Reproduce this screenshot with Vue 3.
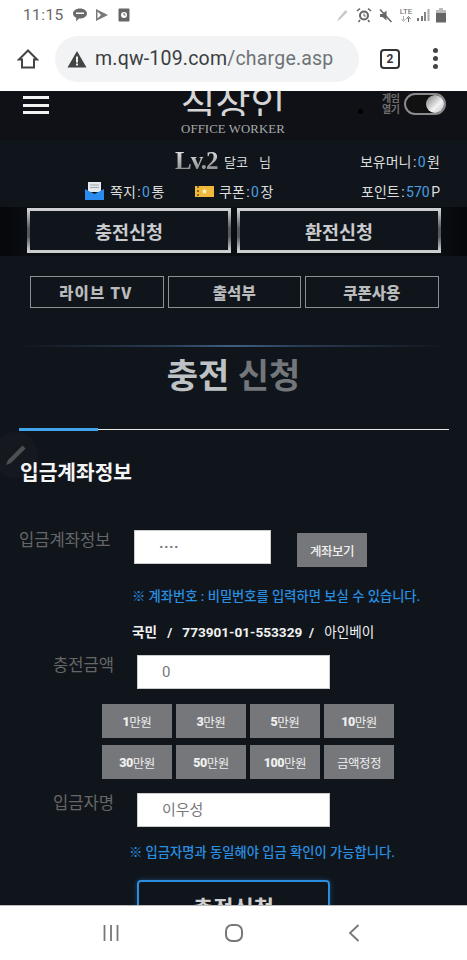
<script setup>
const rows = [
  [['1', '만원'], ['3', '만원'], ['5', '만원'], ['10', '만원']],
  [['30', '만원'], ['50', '만원'], ['100', '만원'], ['', '금액정정']],
]
</script>

<template>
  <div class="phone">
    <div class="status">
      <span class="time">11:15</span>
      <svg class="si" width="16" height="16" viewBox="0 0 16 16"><path d="M8 1.500c4 0 7 2.200 7 5s-3 5-7 5l-1 0-3 3 .3-3.800C2 9.800 1 8.300 1 6.500c0-2.800 3-5 7-5z" fill="#6a6a6a"/><rect x="4" y="5.500" width="8" height="1.500" fill="#fff"/></svg>
      <svg class="si play" width="14" height="14" viewBox="0 0 14 14"><path d="M1 1l12 6-12 6z" fill="#7a7a7a"/><path d="M2.500 3.500v7l3.500-3.500z" fill="#fff"/></svg>
      <svg class="si clockapp" width="12" height="14" viewBox="0 0 12 14"><rect width="11" height="13" x=".5" y=".5" rx="1" fill="#666"/><circle cx="6" cy="7" r="3" fill="#fff"/><path d="M6 5v2h1.500" stroke="#666" fill="none"/></svg>
      <span class="spacer"></span>
      <svg width="14" height="14" viewBox="0 0 14 14"><path d="M1 13.500l2-4 6.500-7.500 2 2-7 7z" fill="#c9c9c9"/></svg>
      <svg class="ml" width="16" height="16" viewBox="0 0 16 16"><circle cx="8" cy="8.500" r="5" fill="#666"/><circle cx="8" cy="8.500" r="3" fill="#fff"/><path d="M8 6.500v2.500h2" stroke="#666" fill="none"/><path d="M1 4l3-2.500M15 4l-3-2.500M4 13l-1.500 2M12 13l1.500 2" stroke="#666" stroke-width="1.600"/></svg>
      <svg class="ml" width="15" height="15" viewBox="0 0 15 15"><path d="M2 6h2.500l4-3.500v10l-4-3.500H2z" fill="#666"/><path d="M2 1.500l11.500 12.500" stroke="#666" stroke-width="1.500"/></svg>
      <span class="lte">LTE<svg width="12" height="6" viewBox="0 0 12 6"><path d="M3.500 0v4M1.500 3l2 2.500 2-2.500" stroke="#aaa" fill="none"/><path d="M8.500 6V2M6.500 3l2-2.500 2 2.500" stroke="#666" fill="none"/></svg></span>
      <svg class="ml2" width="13" height="14" viewBox="0 0 13 14"><rect x="0" y="10" width="2" height="3" fill="#777"/><rect x="4" y="8" width="2" height="5" fill="#777"/><rect x="7" y="4" width="2" height="9" fill="#888"/><rect x="10.500" y="1" width="2" height="12" fill="#aaa"/></svg>
      <svg class="ml" width="10" height="15" viewBox="0 0 10 15"><rect x="3" y="0" width="4" height="2" fill="#bbb"/><rect x="0" y="2" width="10" height="3" fill="#bbb"/><rect x="0" y="5" width="10" height="9.500" fill="#666"/></svg>
    </div>

    <div class="toolbar">
      <svg class="home" width="22" height="22" viewBox="0 0 22 22"><path d="M11 2.500L2 11.500h3v8h12v-8h3z" fill="none" stroke="#444" stroke-width="2"/></svg>
      <div class="omni">
        <svg width="20" height="18" viewBox="0 0 20 18"><path d="M10 1l9.500 16.500H.5z" fill="#444"/><rect x="9" y="6.500" width="2" height="6" fill="#f1f3f4"/><rect x="9" y="13.500" width="2" height="2" fill="#f1f3f4"/></svg>
        <span class="url">m.qw-109.com<span class="path">/charge.asp</span></span>
      </div>
      <span class="tabs">2</span>
      <span class="dots"><i></i><i></i><i></i></span>
    </div>

    <main class="content">
      <header class="top">
        <div class="burger"><i></i><i></i><i></i></div>
        <div class="logo">
          <div class="logo-clip"><span>직장인</span></div>
          <div class="logo-en">OFFICE WORKER</div>
        </div>
        <span class="bullet"></span>
        <div class="game"><span>게임<br>열기</span><div class="toggle"><i></i></div></div>
      </header>

      <section class="info">
        <div class="info-row first">
          <span class="lv">Lv.2</span>
          <span class="nick">달코</span><span class="nim">님</span>
          <span class="right money">보유머니 : <b>0</b> 원</span>
        </div>
        <div class="info-row second">
          <svg class="mail" width="19" height="18" viewBox="0 0 19 18"><rect x="3" y="0" width="13" height="10" fill="#e6e9ee"/><rect x="5" y="2.500" width="9" height="1" fill="#9aa"/><rect x="5" y="5" width="9" height="1" fill="#9aa"/><path d="M0 7l9.500 5L19 7v11H0z" fill="#2a8cf0"/></svg>
          <span class="msg">쪽지 : <b>0</b> 통</span>
          <svg class="coupon" width="19" height="11" viewBox="0 0 19 11"><rect width="19" height="11" fill="#f0b93c"/><path d="M9.500 2.500l.9 2h2l-1.600 1.400.6 2.100-1.900-1.200-1.900 1.200.6-2.100L6.600 4.500h2z" fill="#fff6c8"/><path d="M3 0v11" stroke="#0f141b" stroke-dasharray="2 2"/></svg>
          <span class="msg">쿠폰 : <b>0</b> 장</span>
          <span class="right money">포인트 : <b>570</b> P</span>
        </div>
      </section>

      <div class="band">
        <a class="big">충전신청</a>
        <a class="big">환전신청</a>
      </div>

      <nav class="subs">
        <a class="sub tv">라이브 TV</a>
        <a class="sub">출석부</a>
        <a class="sub">쿠폰사용</a>
      </nav>

      <div class="glow"></div>
      <h1 class="title"><span>충전</span> <em>신청</em></h1>

      <div class="rule"><i></i></div>

      <div class="fab">
        <svg width="24" height="24" viewBox="0 0 24 24"><path d="M2 22l2-5L18.500 2.500l3 3L7 20z" fill="#4d4f52"/></svg>
      </div>

      <h2 class="sect">입금계좌정보</h2>

      <div class="acct">
        <label class="lab wide">입금계좌정보</label>
        <div class="inp short">····</div>
        <a class="view">계좌보기</a>
      </div>
      <p class="note n1">※ 계좌번호 : 비밀번호를 입력하면 보실 수 있습니다.</p>
      <p class="bank">국민 &nbsp; / &nbsp; 773901-01-553329 &nbsp;/ &nbsp; <span>아인베이</span></p>

      <div class="fld f1">
        <label class="lab">충전금액</label>
        <div class="inp">0</div>
      </div>

      <div class="amounts">
        <template v-for="(r, ri) in rows" :key="ri">
          <a v-for="c in r" :key="c.join()" class="amt"><b>{{ c[0] }}</b>{{ c[1] }}</a>
        </template>
      </div>

      <div class="fld f2">
        <label class="lab">입금자명</label>
        <div class="inp">이우성</div>
      </div>

      <p class="note n2">※ 입금자명과 동일해야 입금 확인이 가능합니다.</p>

      <a class="submit">충전신청</a>
    </main>

    <div class="nav">
      <svg width="18" height="18" viewBox="0 0 18 18"><path d="M2.500 1v16M9 1v16M15.500 1v16" stroke="#777" stroke-width="1.800"/></svg>
      <svg width="20" height="20" viewBox="0 0 20 20"><rect x="2" y="2" width="16" height="16" rx="6" fill="none" stroke="#777" stroke-width="2"/></svg>
      <svg width="12" height="18" viewBox="0 0 12 18"><path d="M10.500 1L2 9l8.500 8" fill="none" stroke="#777" stroke-width="1.800"/></svg>
    </div>
  </div>
</template>

<style>
html, body { margin: 0; background: #fff; }
</style>

<style scoped>
* { box-sizing: border-box; }
.phone {
  width: 467px; height: 960px; display: flex; flex-direction: column; overflow: hidden;
  font-family: Roboto, "Noto Sans CJK KR", sans-serif; background: #fff;
}
.status { height: 30px; flex: none; display: flex; align-items: center; padding: 0 21px 0 23px; color: #666; }
.time { font-size: 15.500px; letter-spacing: .4px; margin-right: 8px; }
.si { margin-right: 5px; }
.si.play { margin-left: 2px; margin-right: 9px; }
.spacer { flex: 1; }
.ml { margin-left: 6px; }
.ml2 { margin-left: 4px; }
.lte { font-size: 8px; line-height: 8px; width: 14px; margin-left: 6px; color: #666; display: flex; flex-direction: column; align-items: center; }

.toolbar { height: 61px; flex: none; display: flex; align-items: center; padding: 0 0 4px 17px; }
.home { flex: none; }
.omni { width: 304px; height: 46px; margin-left: 16px; border-radius: 23px; background: #f1f3f4; display: flex; align-items: center; padding-left: 12px; }
.url { font-size: 19.500px; color: #3a3d40; margin-left: 8px; letter-spacing: .2px; white-space: nowrap; }
.path { color: #6f7377; }
.tabs { width: 20px; height: 20px; margin-left: 21px; border: 2px solid #333; border-radius: 4px; font-size: 12px; font-weight: 700; color: #333; display: flex; align-items: center; justify-content: center; }
.dots { margin-left: 33px; display: flex; flex-direction: column; gap: 3px; }
.dots i { width: 5px; height: 5px; border-radius: 50%; background: #444; }

.content { flex: 1; min-height: 0; overflow: hidden; background: #10151c; position: relative; color: #fff; }
.top { height: 49px; background: #0f1116; display: flex; position: relative; }
.burger { display: flex; flex-direction: column; gap: 4.500px; padding: 5px 0 0 23px; width: 178px; }
.burger i { display: block; width: 26px; height: 3px; background: #f2f2f2; }
.logo { width: 110px; display: flex; flex-direction: column; align-items: center; }
.logo-clip { height: 25px; overflow: hidden; position: relative; width: 110px; }
.logo-clip span {
  position: absolute; left: 0; right: 0; bottom: -4px; text-align: center; font-size: 38px; line-height: 38px; font-weight: 400;
  font-family: "Noto Sans CJK KR", sans-serif; color: #d6d6d6;
}
.logo-en { font-family: "Liberation Serif", serif; font-size: 12.800px; line-height: 14px; letter-spacing: .1px; color: #a8a8a8; margin-top: 6px; white-space: nowrap; }
.bullet { width: 5px; height: 5px; border-radius: 50%; background: #000; margin: 18px 0 0 70px; }
.game { display: flex; align-items: flex-start; margin-left: 19px; padding-top: 2px; }
.game span { font-size: 10px; line-height: 11px; font-weight: 700; color: #6f6f6f; width: 22px; text-align: left; letter-spacing: -.5px; white-space: nowrap; }
.toggle { width: 42px; height: 22px; border: 2px solid #8a8a8a; border-radius: 11px; display: flex; align-items: center; justify-content: flex-end; background: #111; }
.toggle i { width: 18px; height: 18px; border-radius: 50%; background: linear-gradient(135deg, #777, #f2f2f2 60%, #bbb); }

.info { height: 67px; position: relative; font-size: 14px; color: #ddd; word-spacing: -2px; }
.info b { font-weight: 400; color: #4a9ee0; }
.info-row { position: relative; display: flex; align-items: center; height: 26px; }
.info-row.first { padding: 8px 0 0 175px; height: 34px; }
.info-row.second { padding: 3px 0 0 85px; height: 31px; }
.lv {
  font-family: "Liberation Serif", serif; font-size: 25px; font-weight: 700; letter-spacing: -1px; width: 49px; white-space: nowrap;
  background: linear-gradient(#f0f0f0, #777); -webkit-background-clip: text; background-clip: text; color: transparent;
}
.nick { margin-right: 11px; font-size: 13px; }
.nim { font-size: 13px; }
.right { position: absolute; right: 27px; white-space: nowrap; }
.mail { margin-right: 6px; }
.msg { white-space: nowrap; width: 85px; }
.coupon { margin-right: 5px; }

.band {
  height: 49px; padding: 1px 26px 0 27px; display: flex; gap: 6px; align-items: flex-start;
  background: linear-gradient(90deg, #05070a 0, #0a0d12 6%, #0a0d12 94%, #05070a 100%);
}
.big {
  width: 204px; height: 45px; display: flex; align-items: center; justify-content: center;
  border: 3px solid #a5a8ab; border-image: linear-gradient(#d0d2d4, #55585c 45%, #55585c 65%, #d0d2d4) 1;
  background: #10151c; font-size: 18.500px; font-weight: 700; color: #c9cbcd;
}
.subs { display: flex; gap: 4px; padding: 20px 0 0 30px; }
.sub {
  width: 133.500px; height: 32px; display: flex; align-items: center; justify-content: center;
  border: 1px solid #8d9094; font-family: "Noto Sans CJK KR", sans-serif; font-size: 15.500px; font-weight: 900; color: #b9bbbd; white-space: nowrap;
}
.sub.tv { letter-spacing: 1.200px; padding-right: 2px; }
.glow { height: 2px; margin: 37px 18px 0; background: linear-gradient(90deg, #10151c, #2a3d55 35%, #3f5f85 50%, #2a3d55 65%, #10151c); }
.title { margin: 0; text-align: center; height: 57px; font-size: 34px; line-height: 59px; font-weight: 700; color: #bfc2c5; }
.title em { font-style: normal; color: #73767a; }
.rule { height: 1px; margin: 25px 18px 0 19px; background: #e6e6e6; position: relative; }
.rule i { position: absolute; left: 0; bottom: -1px; width: 79px; height: 3px; background: #41a5ee; }
.fab { position: absolute; left: -8px; top: 341px; width: 46px; height: 46px; border-radius: 50%; background: #15191f; padding: 11px 0 0 12px; }
.sect { position: relative; margin: 30px 0 0 20px; height: 27px; font-size: 20.300px; line-height: 27px; font-weight: 700; color: #f4f4f4; }

.acct { display: flex; align-items: flex-start; margin-top: 43px; padding-left: 19px; height: 37px; }
.lab { font-size: 16.600px; color: #666; white-space: nowrap; line-height: 22px; }
.wide { width: 115px; }
.inp { width: 193px; height: 34px; background: #fff; border: 1px solid #ccc; font-size: 15px; color: #777; line-height: 32px; padding-left: 24px; }
.inp.short { width: 137px; letter-spacing: .5px; font-weight: 700; }
.view { margin: 3px 0 0 26px; width: 70px; height: 34px; background: #76777a; color: #eee; font-size: 12.500px; font-weight: 500; display: flex; align-items: center; justify-content: center; letter-spacing: -.5px; }
.note { margin: 0; color: #2a8ee0; font-size: 13.300px; font-weight: 500; line-height: 18px; white-space: nowrap; }
.n1 { padding: 21px 0 0 132px; }
.bank { margin: 0; padding: 17px 0 0 132px; font-size: 13.600px; font-weight: 700; line-height: 18px; color: #f2f2f2; white-space: nowrap; }
.bank span { font-weight: 400; }
.fld { display: flex; align-items: flex-start; padding-left: 53px; }
.fld .lab { width: 84px; }
.f1 { margin-top: 14px; }
.f2 { margin-top: 14px; }
.amounts { display: grid; grid-template-columns: repeat(4, 70px); gap: 7px 4px; margin: 15px 0 0 102px; }
.amt { height: 34px; background: #76777a; color: #eee; font-size: 12.500px; display: flex; align-items: center; justify-content: center; white-space: nowrap; letter-spacing: -.5px; }
.amt b { font-weight: 900; }
.n2 { padding: 17px 0 0 129px; }
.submit {
  display: flex; justify-content: center; width: 193px; height: 50px; margin: 18px 0 0 137px; padding-top: 8px;
  border: 2px solid #2a8ee0; border-radius: 4px; font-size: 22px; font-weight: 700; color: #cfcfcf; box-shadow: 0 0 5px #2a8ee066;
}
.nav { height: 55px; flex: none; background: #fff; border-top: 1px solid #bbb; display: flex; align-items: center; padding: 0 107px 0 102px; justify-content: space-between; }
</style>
